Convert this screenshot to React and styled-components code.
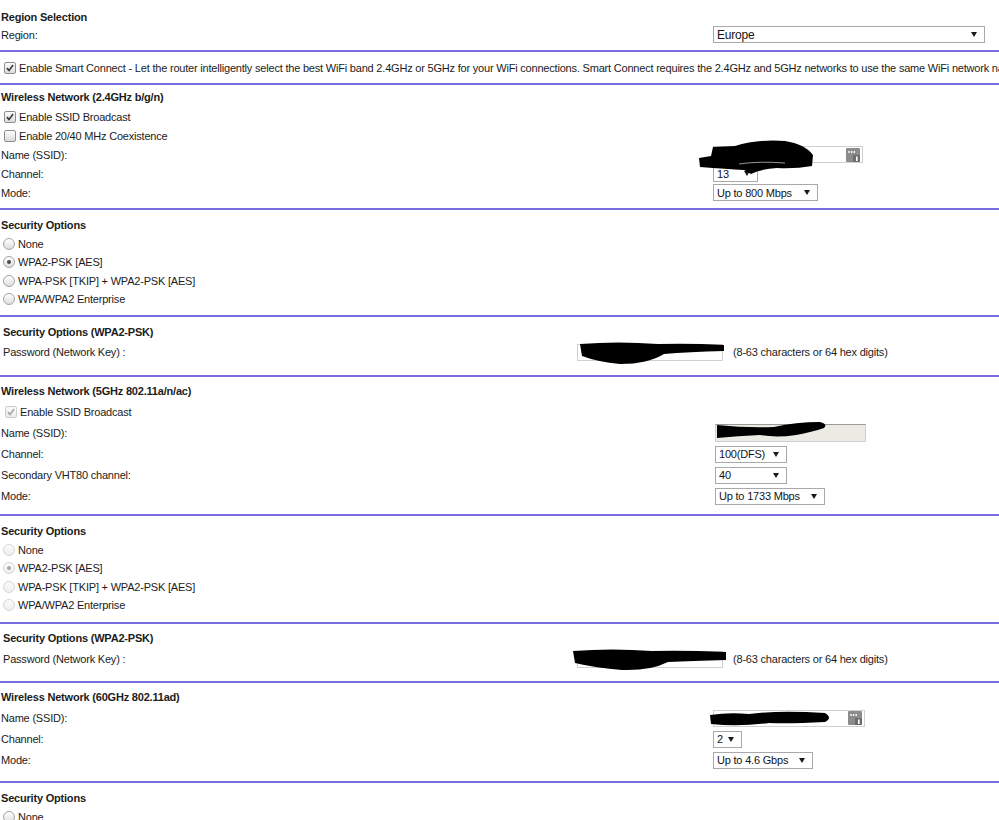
import React from 'react';
import styled, { createGlobalStyle } from 'styled-components';

const Global = createGlobalStyle`
  html, body {
    margin: 0;
    padding: 0;
    overflow: hidden;
    background: #fff;
  }
`;

const Page = styled.div`
  width: 999px;
  height: 820px;
  overflow: hidden;
  font-family: "Liberation Sans", Arial, sans-serif;
  font-size: 11px;
  letter-spacing: -0.2px;
  color: #1c1c1c;
`;

const Section = styled.section`
  padding: ${(p) => p.$pt}px 0 ${(p) => p.$pb}px;
  border-bottom: ${(p) => (p.$last ? 'none' : '2px solid #776ce0')};
`;

const Row = styled.div`
  display: grid;
  grid-template-columns: ${(p) => p.$col || 712}px auto 1fr;
  align-items: center;
  height: ${(p) => p.$h}px;
  padding-left: ${(p) => (p.$indent ? 3 : 1)}px;
  white-space: nowrap;
`;

const Heading = styled.div`
  font-weight: bold;
  height: ${(p) => p.$h}px;
  line-height: ${(p) => p.$h}px;
  padding-left: ${(p) => (p.$indent ? 3 : 1)}px;
  white-space: nowrap;
`;

const Option = styled.label`
  display: flex;
  align-items: center;
  gap: 3px;
  height: ${(p) => p.$h}px;
  padding-left: ${(p) => p.$left}px;
  white-space: nowrap;
`;

const CheckBox = styled.span`
  display: inline-flex;
  flex: none;
  align-items: center;
  justify-content: center;
  width: 10px;
  height: 10px;
  border: 1px solid ${(p) => (p.$disabled ? '#cdcdcd' : '#8f8f8f')};
  border-radius: 2px;
  background: ${(p) =>
    p.$disabled ? 'linear-gradient(#fafafa, #ececec)' : 'linear-gradient(#fefefe, #dadada)'};
`;

const Radio = styled.span`
  display: inline-flex;
  flex: none;
  align-items: center;
  justify-content: center;
  width: 10px;
  height: 10px;
  border: 1px solid ${(p) => (p.$disabled ? '#d6d6d6' : '#a4a4a4')};
  border-radius: 50%;
  background: ${(p) =>
    p.$disabled ? 'linear-gradient(#fbfbfb, #eeeeee)' : 'linear-gradient(#ffffff, #dedede)'};
`;

const Dot = styled.span`
  width: 4px;
  height: 4px;
  border-radius: 50%;
  background: ${(p) => (p.$disabled ? '#a8a8a8' : '#4a4a4a')};
`;

const Select = styled.span`
  display: inline-flex;
  align-items: center;
  justify-content: space-between;
  box-sizing: border-box;
  width: ${(p) => p.$w}px;
  height: 17px;
  padding: 0 7px 0 3px;
  border: 1px solid #a9a9a9;
  background: #fff;
  color: #141414;
  font-size: ${(p) => (p.$big ? 12 : 11)}px;
`;

const Arrow = styled.span`
  width: 0;
  height: 0;
  border-left: 3px solid transparent;
  border-right: 3px solid transparent;
  border-top: 5px solid #1a1a1a;
`;

const InputBox = styled.span`
  position: relative;
  display: inline-flex;
  align-items: center;
  justify-content: flex-end;
  box-sizing: border-box;
  width: ${(p) => p.$w}px;
  height: ${(p) => p.$hgt || 17}px;
  padding-right: 2px;
  border: 1px solid #d0d0d0;
  border-top-color: ${(p) => (p.$disabled ? '#9a9a9a' : '#d0d0d0')};
  background: ${(p) => (p.$disabled ? '#ebebe4' : '#fff')};
`;

const Scribble = styled.svg`
  position: absolute;
  left: ${(p) => p.$x}px;
  top: ${(p) => p.$y}px;
  overflow: visible;
`;

const Hint = styled.span`
  padding-left: 10px;
`;

function SelectBox({ value, w, big }) {
  return (
    <Select $w={w} $big={big}>
      <span>{value}</span>
      <Arrow />
    </Select>
  );
}

function Check({ checked, disabled }) {
  return (
    <CheckBox $disabled={disabled}>
      {checked && (
        <svg width="8" height="8" viewBox="0 0 9 9">
          <path
            d="M1 4.6 L3.4 7.2 L8 1.2"
            fill="none"
            stroke={disabled ? '#a5a5a5' : '#3b3b3b'}
            strokeWidth="1.8"
          />
        </svg>
      )}
    </CheckBox>
  );
}

function RadioOption({ label, checked, disabled, h }) {
  return (
    <Option $h={h} $left={3}>
      <Radio $disabled={disabled}>{checked && <Dot $disabled={disabled} />}</Radio>
      <span>{label}</span>
    </Option>
  );
}

function KeyIcon() {
  return (
    <svg width="14" height="14" viewBox="0 0 14 14">
      <rect x="0" y="0" width="14" height="14" rx="1" fill="#8c8c8c" />
      <circle cx="3" cy="4" r="0.9" fill="#fff" />
      <circle cx="5.6" cy="4" r="0.9" fill="#fff" />
      <circle cx="8.2" cy="4" r="0.9" fill="#fff" />
      <rect x="7" y="7" width="7" height="7" fill="#6d6d6d" />
      <rect x="10" y="8.5" width="1.6" height="4.5" fill="#fff" />
    </svg>
  );
}

const blobA =
  'M0 17 L12 15 L14 6 L36 5 Q58 -2 86 0 Q106 3 114 14 L113 25 Q96 28 78 27 Q62 28 52 33 L45 29 Q28 28 1 26 Z';
const blobB =
  'M2 1 Q40 -2 80 1 Q112 0 146 2 L146 8 Q110 9 86 11 Q70 21 42 21 Q20 19 4 13 Z';
const blobC =
  'M1 3 Q30 6 58 5 Q80 0 104 0 Q112 2 108 6 Q96 10 80 13 Q60 16 44 13 Q22 14 1 16 Z';
const blobD =
  'M1 2 Q40 -1 80 2 Q110 1 154 3 L154 11 Q120 12 96 13 Q78 22 50 21 Q24 19 3 14 Z';
const blobE =
  'M1 5 Q20 2 40 4 Q70 0 116 3 Q124 8 116 12 Q80 14 60 13 Q30 17 2 14 Z';

export default function App() {
  return (
    <Page>
      <Global />

      <Section $pt={9} $pb={7}>
        <Heading $h={17}>Region Selection</Heading>
        <Row $h={17}>
          <span>Region:</span>
          <SelectBox value="Europe" w={272} big />
        </Row>
      </Section>

      <Section $pt={6} $pb={6}>
        <Option $h={19} $left={4}>
          <Check checked />
          <span>
            Enable Smart Connect - Let the router intelligently select the best WiFi band 2.4GHz or
            5GHz for your WiFi connections. Smart Connect requires the 2.4GHz and 5GHz networks to
            use the same WiFi network name (SSID) and network key (password).
          </span>
        </Option>
      </Section>

      <Section $pt={3} $pb={6}>
        <Heading $h={19}>Wireless Network (2.4GHz b/g/n)</Heading>
        <Option $h={19} $left={4}>
          <Check checked />
          <span>Enable SSID Broadcast</span>
        </Option>
        <Option $h={19} $left={4}>
          <Check />
          <span>Enable 20/40 MHz Coexistence</span>
        </Option>
        <Row $h={19}>
          <span>Name (SSID):</span>
          <InputBox $w={150}>
            <KeyIcon />
            <Scribble $x={-15} $y={-6} width="116" height="34" viewBox="0 0 116 34">
              <path d={blobA} fill="#000" />
              <path d="M40 23 Q60 20 86 22" stroke="#bdbdbd" strokeWidth="0.8" fill="none" />
            </Scribble>
          </InputBox>
        </Row>
        <Row $h={19}>
          <span>Channel:</span>
          <SelectBox value="13" w={45} />
        </Row>
        <Row $h={19}>
          <span>Mode:</span>
          <SelectBox value="Up to 800 Mbps" w={105} />
        </Row>
      </Section>

      <Section $pt={6} $pb={6.5}>
        <Heading $h={18.5}>Security Options</Heading>
        <RadioOption h={18.5} label="None" />
        <RadioOption h={18.5} label="WPA2-PSK [AES]" checked />
        <RadioOption h={18.5} label="WPA-PSK [TKIP] + WPA2-PSK [AES]" />
        <RadioOption h={18.5} label="WPA/WPA2 Enterprise" />
      </Section>

      <Section $pt={5} $pb={13}>
        <Heading $h={20} $indent>
          Security Options (WPA2-PSK)
        </Heading>
        <Row $h={20} $col={574} $indent>
          <span>Password (Network Key) :</span>
          <InputBox $w={146}>
            <Scribble $x={0} $y={-2} width="148" height="22" viewBox="0 0 148 22">
              <path d={blobB} fill="#000" />
            </Scribble>
          </InputBox>
          <Hint>(8-63 characters or 64 hex digits)</Hint>
        </Row>
      </Section>

      <Section $pt={3.5} $pb={7.5}>
        <Heading $h={21}>Wireless Network (5GHz 802.11a/n/ac)</Heading>
        <Option $h={21} $left={5}>
          <Check checked disabled />
          <span>Enable SSID Broadcast</span>
        </Option>
        <Row $h={21} $col={714}>
          <span>Name (SSID):</span>
          <InputBox $w={151} $hgt={18} $disabled>
            <Scribble $x={0} $y={-3} width="110" height="18" viewBox="0 0 110 18">
              <path d={blobC} fill="#000" />
            </Scribble>
          </InputBox>
        </Row>
        <Row $h={21} $col={714}>
          <span>Channel:</span>
          <SelectBox value="100(DFS)" w={72} />
        </Row>
        <Row $h={21} $col={714}>
          <span>Secondary VHT80 channel:</span>
          <SelectBox value="40" w={72} />
        </Row>
        <Row $h={21} $col={714}>
          <span>Mode:</span>
          <SelectBox value="Up to 1733 Mbps" w={110} />
        </Row>
      </Section>

      <Section $pt={5.75} $pb={7.75}>
        <Heading $h={18.5}>Security Options</Heading>
        <RadioOption h={18.5} label="None" disabled />
        <RadioOption h={18.5} label="WPA2-PSK [AES]" checked disabled />
        <RadioOption h={18.5} label="WPA-PSK [TKIP] + WPA2-PSK [AES]" disabled />
        <RadioOption h={18.5} label="WPA/WPA2 Enterprise" disabled />
      </Section>

      <Section $pt={3.5} $pb={11.5}>
        <Heading $h={21} $indent>
          Security Options (WPA2-PSK)
        </Heading>
        <Row $h={21} $col={574} $indent>
          <span>Password (Network Key) :</span>
          <InputBox $w={146}>
            <Scribble $x={-6} $y={-3} width="156" height="22" viewBox="0 0 156 22">
              <path d={blobD} fill="#000" />
            </Scribble>
          </InputBox>
          <Hint>(8-63 characters or 64 hex digits)</Hint>
        </Row>
      </Section>

      <Section $pt={3.5} $pb={10.5}>
        <Heading $h={21}>Wireless Network (60GHz 802.11ad)</Heading>
        <Row $h={21}>
          <span>Name (SSID):</span>
          <InputBox $w={152}>
            <KeyIcon />
            <Scribble $x={-5} $y={-1} width="124" height="18" viewBox="0 0 124 18">
              <path d={blobE} fill="#000" />
            </Scribble>
          </InputBox>
        </Row>
        <Row $h={21}>
          <span>Channel:</span>
          <SelectBox value="2" w={29} />
        </Row>
        <Row $h={21}>
          <span>Mode:</span>
          <SelectBox value="Up to 4.6 Gbps" w={100} />
        </Row>
      </Section>

      <Section $pt={5.5} $pb={0} $last>
        <Heading $h={19}>Security Options</Heading>
        <RadioOption h={19} label="None" />
      </Section>
    </Page>
  );
}
